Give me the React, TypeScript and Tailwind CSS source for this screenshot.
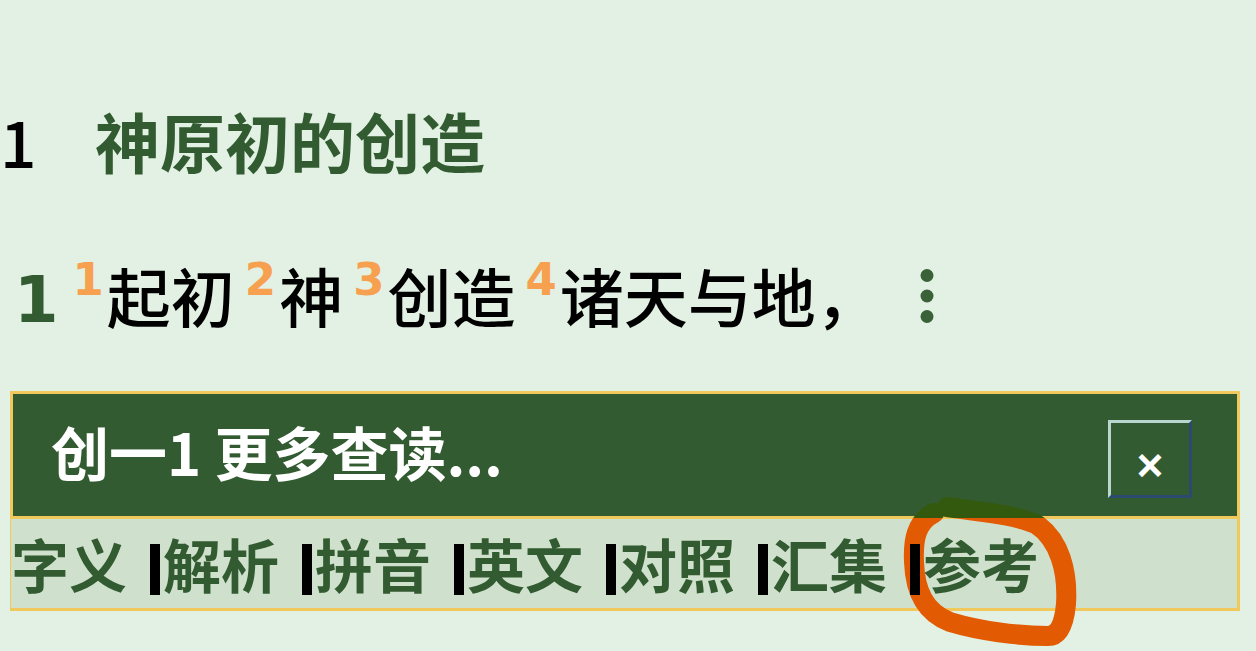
const tabs = ['字义', '解析', '拼音', '英文', '对照', '汇集', '参考'];

const verse = [
    { n: 1, text: '起初' },
    { n: 2, text: '神' },
    { n: 3, text: '创造' },
    { n: 4, text: '诸天与地，' },
];

// the hand-drawn circle round 参考, in page coordinates
const ringPath =
    'M 947 507 C 980 512, 1012 514, 1036 524 C 1060 540, 1068 572, 1066 604 C 1064 626, 1058 636, 1048 636 C 1018 636, 980 631, 950 622 C 924 612, 915 590, 914 562 C 913 540, 916 522, 934 513';

const Annotation = () => (
    <svg className="absolute left-0 top-0 pointer-events-none" width={1256} height={651} viewBox="0 0 1256 651">
        <defs>
            <clipPath id="overHeader">
                <rect x={0} y={0} width={1256} height={518} />
            </clipPath>
            <clipPath id="belowHeader">
                <rect x={0} y={518} width={1256} height={133} />
            </clipPath>
        </defs>
        <path d={ringPath} fill="none" stroke="#33590e" strokeWidth={20} strokeLinecap="round" strokeLinejoin="round" clipPath="url(#overHeader)" />
        <path d={ringPath} fill="none" stroke="#e25a02" strokeWidth={20} strokeLinecap="round" strokeLinejoin="round" clipPath="url(#belowHeader)" />
    </svg>
);

const App = () => {
    return (
        <div className="relative w-[1256px] h-[651px] overflow-hidden bg-[#e2f1e3] font-['Noto_Sans_CJK_SC','Noto_Sans',sans-serif]">
            <div className="pt-[108px]">
                {/* section heading */}
                <div className="flex items-baseline h-[65px] leading-[65px]">
                    <span className="w-[95px] text-[64px] font-medium text-black">1</span>
                    <span className="text-[65px] font-bold text-[#335b31]">神原初的创造</span>
                </div>

                {/* verse line */}
                <div className="mt-[89px] h-[65px] leading-[65px] text-[64px] font-medium whitespace-nowrap text-black">
                    <span className="ml-[14px] font-['DejaVu_Sans',sans-serif] text-[64px] font-bold text-[#335b31]">1</span>
                    {verse.map((v, i) => (
                        <span key={v.n} className={i === 0 ? 'ml-[14px]' : 'ml-[10px]'}>
                            <sup className="top-[-27px] mr-[3px] font-['DejaVu_Sans',sans-serif] text-[45px] font-bold text-[#f7a04f]">{v.n}</sup>
                            {v.text}
                        </span>
                    ))}
                    <svg className="inline-block ml-[40px] mb-[17px]" width={14} height={54} viewBox="0 0 14 54">
                        <circle cx={7} cy={6.5} r={6.5} fill="#3a6138" />
                        <circle cx={7} cy={27} r={6.5} fill="#3a6138" />
                        <circle cx={7} cy={47.5} r={6.5} fill="#3a6138" />
                    </svg>
                </div>

                {/* more-reading panel */}
                <div className="mt-[64px] ml-[10px] w-[1230px] border-[3px] border-[#f1c85c]">
                    <div className="flex items-center justify-between h-[125px] border-b-[3px] border-[#f1c85c] bg-[#335b31] pl-[38px] pr-[45px]">
                        <span className="mb-[8px] text-[58px] font-bold text-white">创一1 更多查读...</span>
                        <button className="mt-[8px] flex items-center justify-center w-[84px] h-[78px] pt-[12px] border-[3px] border-t-[#b9d6cf] border-l-[#b9d6cf] border-b-[#2b4b6e] border-r-[#2b4b6e] text-white font-['Liberation_Sans',sans-serif] font-bold text-[46px] leading-none">
                            ×
                        </button>
                    </div>
                    <div className="flex items-center h-[89px] -ml-[2px] bg-[#cfe1cc] text-[58px] font-bold text-[#335b31]">
                        {tabs.map((t, i) => (
                            <span key={t} className={i === 0 ? 'flex items-center' : 'flex items-center ml-[23px]'}>
                                {i > 0 && <span className="relative z-10 mt-[12px] mr-[3px] w-[10px] h-[51px] bg-black" />}
                                {t}
                            </span>
                        ))}
                    </div>
                </div>
            </div>
            <Annotation />
        </div>
    );
};

export default App;
